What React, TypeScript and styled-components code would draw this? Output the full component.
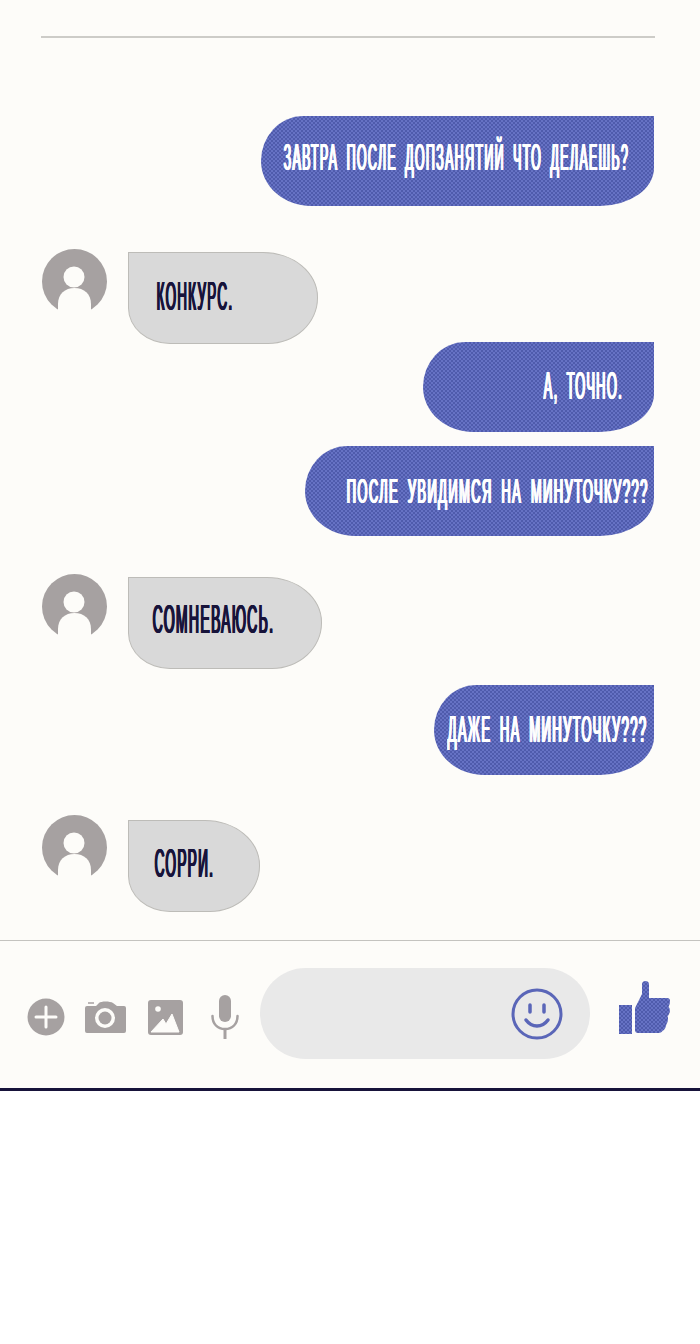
import React, { FC } from 'react';
import styled, { createGlobalStyle } from 'styled-components';

const colors = {
  paper: '#fdfcf9',
  blue: '#5a66b8',
  blueLight: '#6672c4',
  blueDark: '#4f5bac',
  grey: '#d9d9d9',
  greyEdge: '#bdbcb8',
  icon: '#a6a1a1',
  ink: '#17133a',
  field: '#e9e9e9',
};

const GlobalStyle = createGlobalStyle`
  html, body {
    margin: 0;
    padding: 0;
    background: #ffffff;
  }
`;

const Page = styled.div`
  width: 700px;
  height: 1344px;
  overflow: hidden;
  background: #ffffff;
`;

const Chat = styled.div`
  height: 1091px;
  box-sizing: border-box;
  background: ${colors.paper};
  border-bottom: 3px solid ${colors.ink};
  display: flex;
  flex-direction: column;
`;

const TopRule = styled.div`
  height: 2px;
  margin: 36px 45px 0 41px;
  background: #cdccc8;
`;

const Thread = styled.div`
  height: 902px;
  box-sizing: border-box;
  display: flex;
  flex-direction: column;
`;

const OutRow = styled.div<{ $top: number }>`
  margin-top: ${p => p.$top}px;
  padding-right: 46px;
  display: flex;
  justify-content: flex-end;
`;

const InRow = styled.div<{ $top: number }>`
  margin-top: ${p => p.$top}px;
  padding-left: 42px;
  display: flex;
  align-items: flex-start;
  gap: 21px;
`;

const OutBubble = styled.div<{ $width: number; $pad: number }>`
  width: ${p => p.$width}px;
  height: 90px;
  box-sizing: border-box;
  padding-left: ${p => p.$pad}px;
  display: flex;
  align-items: center;
  border-radius: 42px 0 54px 50px / 45px 0 38px 45px;
  background-color: ${colors.blue};
  background-image: repeating-conic-gradient(
    ${colors.blueDark} 0 25%,
    ${colors.blueLight} 0 50%
  );
  background-size: 4px 4px;
  color: #ffffff;
`;

const InBubble = styled.div<{ $width: number; $pad: number; $drop: number }>`
  width: ${p => p.$width}px;
  height: 92px;
  margin-top: ${p => p.$drop}px;
  box-sizing: border-box;
  padding-left: ${p => p.$pad}px;
  display: flex;
  align-items: center;
  border: 1px solid ${colors.greyEdge};
  border-radius: 0 55px 50px 42px / 0 45px 46px 36px;
  background: ${colors.grey};
  color: ${colors.ink};
`;

/* the reference lettering is a tall condensed face: stretch a narrow one and
   thicken only its stems with a sideways shadow */
const Label = styled.span<{ $squeeze: number; $size: number; $lift: number; $wordGap: number }>`
  display: inline-block;
  margin-bottom: ${p => p.$lift * 2}px;
  font-family: 'Liberation Sans Narrow', 'Liberation Sans', sans-serif;
  font-size: ${p => p.$size}px;
  line-height: 1;
  letter-spacing: 4px;
  word-spacing: ${p => p.$wordGap}px;
  white-space: nowrap;
  text-shadow: 1.500px 0 0 currentColor, 3px 0 0 currentColor, 3.750px 0 0 currentColor;
  transform: scaleX(${p => p.$squeeze});
  transform-origin: left center;
`;

const Composer = styled.div`
  border-top: 1px solid #c4c3bf;
  flex: 1;
  display: flex;
  align-items: center;
  padding: 0 29px 0 27px;
`;

const Tools = styled.div`
  width: 233px;
  margin-top: 5px;
  display: flex;
  align-items: center;
`;

const ToolIcon = styled.svg<{ $gap: number }>`
  display: block;
  margin-right: ${p => p.$gap}px;
  flex-shrink: 0;
`;

const Field = styled.div`
  width: 330px;
  height: 91px;
  margin-bottom: 2px;
  border-radius: 46px;
  background: ${colors.field};
  display: flex;
  align-items: center;
  justify-content: flex-end;
  padding-right: 27px;
  box-sizing: border-box;
`;

const Like = styled.svg`
  display: block;
  margin: 0 0 13px 29px;
  flex-shrink: 0;
`;

const Avatar: FC = () => (
  <svg width="65" height="70" viewBox="0 0 65 70">
    <circle cx="32.5" cy="32.5" r="32.5" fill={colors.icon} />
    <circle cx="32" cy="28" r="10.5" fill={colors.paper} />
    <path
      d="M16 70V55c0-10 7-16 16.500-16S49 45 49 55v15z"
      fill={colors.paper}
    />
  </svg>
);

interface MessageProps {
  top: number;
  width: number;
  pad: number;
  size: number;
  squeeze: number;
  lift: number;
  drop?: number;
  text: string;
}

const Out: FC<MessageProps> = ({ top, width, pad, size, squeeze, lift, text }) => (
  <OutRow $top={top}>
    <OutBubble $width={width} $pad={pad}>
      <Label $squeeze={squeeze} $size={size} $lift={lift} $wordGap={10}>{text}</Label>
    </OutBubble>
  </OutRow>
);

const In: FC<MessageProps> = ({ top, width, pad, size, squeeze, lift, drop = 3, text }) => (
  <InRow $top={top}>
    <Avatar />
    <InBubble $width={width} $pad={pad} $drop={drop}>
      <Label $squeeze={squeeze} $size={size} $lift={lift} $wordGap={4}>{text}</Label>
    </InBubble>
  </InRow>
);

const App: FC = () => (
  <Page>
    <GlobalStyle />
    <Chat>
      <TopRule />
      <Thread>
        <Out top={78} width={393} pad={22} size={36} squeeze={0.344} lift={3} text="ЗАВТРА ПОСЛЕ ДОПЗАНЯТИЙ ЧТО ДЕЛАЕШЬ?" />
        <In top={43} width={190} pad={27} size={41} squeeze={0.326} lift={2} text="КОНКУРС." />
        <Out top={-2} width={231} pad={120} size={39} squeeze={0.33} lift={1.5} text="А, ТОЧНО." />
        <Out top={14} width={349} pad={41} size={35} squeeze={0.367} lift={1} text="ПОСЛЕ УВИДИМСЯ НА МИНУТОЧКУ???" />
        <In top={38} width={194} pad={23} size={41} squeeze={0.34} lift={4} text="СОМНЕВАЮСЬ." />
        <Out top={16} width={220} pad={13} size={37} squeeze={0.351} lift={1} text="ДАЖЕ НА МИНУТОЧКУ???" />
        <In top={40} width={132} pad={25} size={41} squeeze={0.331} lift={3} drop={5} text="СОРРИ." />
      </Thread>
      <Composer>
        <Tools>
          <ToolIcon $gap={20} width="38" height="38" viewBox="0 0 38 38">
            <circle cx="19" cy="19" r="18.5" fill={colors.icon} />
            <path d="M19 9v20M9 19h20" stroke={colors.paper} strokeWidth="3" strokeLinecap="round" />
          </ToolIcon>
          <ToolIcon $gap={22} width="41" height="32" viewBox="0 0 41 32">
            <path
              d="M2 5h9l3-3c2-2 11-2 14 0l4 3h7a2 2 0 0 1 2 2v23a2 2 0 0 1-2 2H2a2 2 0 0 1-2-2V7a2 2 0 0 1 2-2z"
              fill={colors.icon}
            />
            <path d="M3 2h6" stroke={colors.icon} strokeWidth="1.500" />
            <circle cx="20" cy="17" r="10" fill={colors.paper} />
            <circle cx="20" cy="17" r="6.500" fill={colors.icon} />
          </ToolIcon>
          <ToolIcon $gap={28} width="35" height="35" viewBox="0 0 35 35">
            <rect width="35" height="35" rx="3" fill={colors.icon} />
            <circle cx="10" cy="9" r="2.800" fill={colors.paper} />
            <path
              d="M3 32l12-13 3 5 6-10 7 18z"
              fill={colors.paper}
              stroke={colors.paper}
              strokeWidth="1"
              strokeLinejoin="round"
            />
          </ToolIcon>
          <ToolIcon $gap={0} width="28" height="44" viewBox="0 0 28 44">
            <rect x="8" width="12" height="27" rx="6" fill={colors.icon} />
            <path d="M1.500 21c0 8 5 13 12.500 13s12.500-5 12.500-13" fill="none" stroke={colors.icon} strokeWidth="2.500" strokeLinecap="round" />
            <path d="M14 34v10" stroke={colors.icon} strokeWidth="3" />
          </ToolIcon>
        </Tools>
        <Field>
          <svg width="52" height="52" viewBox="0 0 52 52">
            <circle cx="26" cy="26" r="24" fill="none" stroke={colors.blue} strokeWidth="3" />
            <path d="M19 17v7M33 17v7" stroke={colors.blue} strokeWidth="3.500" strokeLinecap="round" />
            <path d="M15 32c3 4 7 6 11 6s8-2 11-6" fill="none" stroke={colors.blue} strokeWidth="3.500" strokeLinecap="round" />
          </svg>
        </Field>
        <Like width="52" height="54" viewBox="0 0 52 54">
          <defs>
            <pattern id="halftone" width="4" height="4" patternUnits="userSpaceOnUse">
              <rect width="4" height="4" fill={colors.blueLight} />
              <rect width="2" height="2" fill={colors.blueDark} />
              <rect x="2" y="2" width="2" height="2" fill={colors.blueDark} />
            </pattern>
          </defs>
          <rect y="24" width="13" height="29" fill="url(#halftone)" />
          <path
            d="M16 49V27l7-14V3c0-4 7-4 7 0v14h18c2 0 3 1 3 3 0 3-1 5-1.500 6 1.500 1 2 5 .5 7-.5 1-1 2-1.500 2 1 2 .5 6-1 8-1 4-2 6-4 7-1 1-2 2-4 2H19c-2 0-3-1-3-3z"
            fill="url(#halftone)"
          />
        </Like>
      </Composer>
    </Chat>
  </Page>
);

export default App;
